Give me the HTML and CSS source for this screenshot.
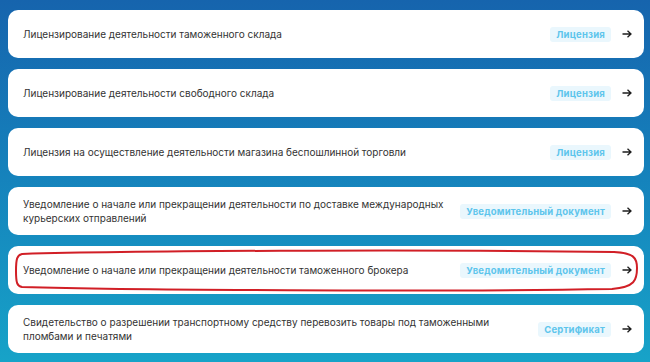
FILE: index.html
```html
<!DOCTYPE html>
<html lang="ru">
<head>
<meta charset="utf-8">
<link rel="stylesheet" href="styles.css">
</head>
<body>
<div class="list">
  <div class="card">
    <div class="title">Лицензирование деятельности таможенного склада</div>
    <span class="tag">Лицензия</span>
    <svg class="arrow" viewBox="0 0 10 8"><path d="M0.5 4H9M5.5 0.7L9 4L5.5 7.3"/></svg>
  </div>
  <div class="card">
    <div class="title">Лицензирование деятельности свободного склада</div>
    <span class="tag">Лицензия</span>
    <svg class="arrow" viewBox="0 0 10 8"><path d="M0.5 4H9M5.5 0.7L9 4L5.5 7.3"/></svg>
  </div>
  <div class="card">
    <div class="title">Лицензия на осуществление деятельности магазина беспошлинной торговли</div>
    <span class="tag">Лицензия</span>
    <svg class="arrow" viewBox="0 0 10 8"><path d="M0.5 4H9M5.5 0.7L9 4L5.5 7.3"/></svg>
  </div>
  <div class="card">
    <div class="title">Уведомление о начале или прекращении деятельности по доставке международных курьерских отправлений</div>
    <span class="tag">Уведомительный документ</span>
    <svg class="arrow" viewBox="0 0 10 8"><path d="M0.5 4H9M5.5 0.7L9 4L5.5 7.3"/></svg>
  </div>
  <div class="card marked">
    <div class="title">Уведомление о начале или прекращении деятельности таможенного брокера</div>
    <span class="tag">Уведомительный документ</span>
    <svg class="arrow" viewBox="0 0 10 8"><path d="M0.5 4H9M5.5 0.7L9 4L5.5 7.3"/></svg>
    <svg class="mark" viewBox="0 0 636 48" preserveAspectRatio="none"><path d="M14 8 C120 5 400 3 606 6 C626 7 629 12 629 22 C629 34 627 41 604 43 C420 46 120 44 14 41 C9 40 8 37 8 25 C8 13 9 9 14 8 Z"/></svg>
  </div>
  <div class="card">
    <div class="title">Свидетельство о разрешении транспортному средству перевозить товары под таможенными пломбами и печатями</div>
    <span class="tag">Сертификат</span>
    <svg class="arrow" viewBox="0 0 10 8"><path d="M0.5 4H9M5.5 0.7L9 4L5.5 7.3"/></svg>
  </div>
</div>
</body>
</html>
```

FILE: styles.css
```css
html, body {
  margin: 0;
  padding: 0;
}
body {
  width: 650px;
  height: 362px;
  overflow: hidden;
  background: linear-gradient(180deg, #1664ad 0%, #1580bb 45%, #17a3c8 100%);
  font-family: Inter, "Noto Sans", sans-serif;
}
.list {
  display: flex;
  flex-direction: column;
  gap: 11px;
  padding: 10px 6px 0 8px;
}
.card {
  position: relative;
  height: 48px;
  box-sizing: border-box;
  background: #fff;
  border-radius: 10px;
  display: flex;
  align-items: center;
  padding: 0 12px 0 15px;
}
.title {
  flex: 1;
  font-size: 10px;
  line-height: 14px;
  color: #333;
  margin-right: 14px;
}
.tag {
  flex: none;
  height: 15px;
  line-height: 15px;
  padding: 0 6px;
  border-radius: 3px;
  background: #eaf7fd;
  color: #5ec5ec;
  font-size: 9.5px;
  font-weight: 700;
  letter-spacing: 0.2px;
  margin-right: 11px;
}
.arrow {
  flex: none;
  width: 10px;
  height: 8px;
  fill: none;
  stroke: #1e1e1e;
  stroke-width: 1.3;
}
.mark {
  position: absolute;
  left: 0;
  top: 0;
  width: 100%;
  height: 100%;
  fill: none;
  stroke: #d11f26;
  stroke-width: 2;
  pointer-events: none;
}
```
